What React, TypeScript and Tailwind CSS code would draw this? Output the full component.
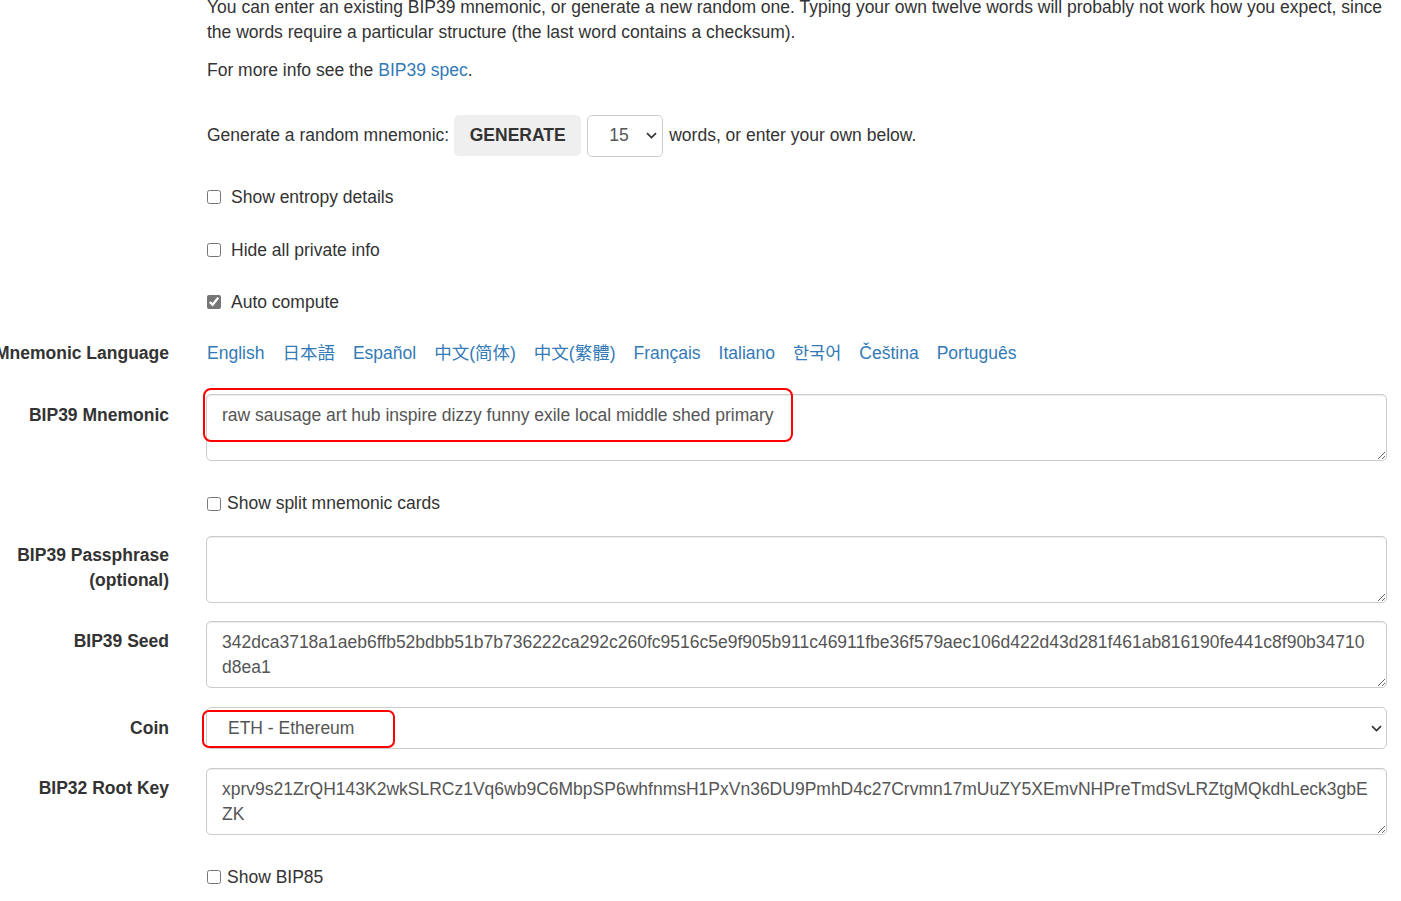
import React from "react";

const languages = [
  "English",
  "日本語",
  "Español",
  "中文(简体)",
  "中文(繁體)",
  "Français",
  "Italiano",
  "한국어",
  "Čeština",
  "Português",
];

const mnemonic = "raw sausage art hub inspire dizzy funny exile local middle shed primary";
const seed =
  "342dca3718a1aeb6ffb52bdbb51b7b736222ca292c260fc9516c5e9f905b911c46911fbe36f579aec106d422d43d281f461ab816190fe441c8f90b34710\nd8ea1";
const rootKey =
  "xprv9s21ZrQH143K2wkSLRCz1Vq6wb9C6MbpSP6whfnmsH1PxVn36DU9PmhD4c27Crvmn17mUuZY5XEmvNHPreTmdSvLRZtgMQkdhLeck3gbE\nZK";

const Row = ({
  label,
  labelClass = "",
  className = "",
  children,
}: {
  label?: React.ReactNode;
  labelClass?: string;
  className?: string;
  children: React.ReactNode;
}) => (
  <div className={`flex ${className}`}>
    <div className={`w-[187px] shrink-0 pr-[18px] flex justify-end whitespace-nowrap font-bold ${labelClass}`}>
      {label && <span className="text-right">{label}</span>}
    </div>
    <div className="flex-1 min-w-0 pl-[19px] pr-[14px]">{children}</div>
  </div>
);

const Chevron = () => (
  <svg width="11" height="7" viewBox="0 0 11 7" fill="none">
    <path d="M1 1.2l4.5 4.3 4.5-4.3" stroke="#333" strokeWidth="1.7" />
  </svg>
);

const Area = ({ value }: { value: string }) => (
  <textarea
    readOnly
    rows={2}
    defaultValue={value}
    className="block w-full h-[67px] rounded-[5px] border border-[#ccc] pl-[15px] pr-[15px] pt-[8px] pb-[6px] text-[#555] leading-[25px] shadow-[inset_0_1px_1px_rgba(0,0,0,0.075)] resize-y outline-none"
  />
);

const Check = ({ label, checked, textGap }: { label: string; checked?: boolean; textGap: string }) => (
  <label className="flex items-center h-[25px]">
    <input
      type="checkbox"
      defaultChecked={checked}
      className="m-0 ml-[1px] w-[14px] h-[14px] accent-[#767676]"
    />
    <span className={textGap}>{label}</span>
  </label>
);

const App = () => {
  return (
    <div className="bg-white min-h-screen overflow-hidden font-['Liberation_Sans','Noto_Sans_CJK_SC',Arial,sans-serif] text-[17.5px] leading-[25px] text-[#333]">
      {/* Intro */}
      <Row className="-mt-[5px]">
        <p className="pl-[1px]">
          You can enter an existing BIP39 mnemonic, or generate a new random one. Typing your own twelve words will
          probably not work how you expect, since
          <br />
          the words require a particular structure (the last word contains a checksum).
        </p>
      </Row>
      <Row className="mt-[12.5px]">
        <p className="pl-[1px]">
          For more info see the <a className="text-[#337ab7]">BIP39 spec</a>.
        </p>
      </Row>

      {/* Generate */}
      <Row className="mt-[32px]">
        <div className="flex items-center h-[42px] pl-[1px]">
          <span>Generate a random mnemonic:</span>
          <button className="ml-[5px] w-[127px] h-[41px] rounded-[5px] bg-[#efefef] font-bold text-[#333]">
            GENERATE
          </button>
          <div className="ml-[6px] w-[76px] h-[42px] rounded-[5px] border border-[#ccc] flex items-center justify-between pl-[21px] pr-[5px] text-[#555]">
            <span>15</span>
            <Chevron />
          </div>
          <span className="ml-[6px]">words, or enter your own below.</span>
        </div>
      </Row>

      {/* Options */}
      <Row className="mt-[28px]">
        <Check label="Show entropy details" textGap="ml-[10px]" />
      </Row>
      <Row className="mt-[28px]">
        <Check label="Hide all private info" textGap="ml-[10px]" />
      </Row>
      <Row className="mt-[27px]">
        <Check label="Auto compute" checked textGap="ml-[10px]" />
      </Row>

      {/* Language */}
      <Row label="Mnemonic Language" className="mt-[26px]">
        <div className="flex gap-[18px] pl-[1px] text-[#337ab7]">
          {languages.map((lang) => (
            <a key={lang} className="whitespace-nowrap">
              {lang}
            </a>
          ))}
        </div>
      </Row>

      {/* Mnemonic */}
      <Row label="BIP39 Mnemonic" labelClass="pt-[8.5px]" className="mt-[28.5px]">
        <div className="relative">
          <Area value={mnemonic} />
          <div className="absolute -left-[3px] -top-[6px] w-[590px] h-[54px] rounded-[8px] border-2 border-[#f00] pointer-events-none" />
        </div>
      </Row>

      <Row className="mt-[30px]">
        <Check label="Show split mnemonic cards" textGap="ml-[6px]" />
      </Row>

      <Row
        label={
          <>
            BIP39 Passphrase
            <br />
            (optional)
          </>
        }
        labelClass="pt-[7.5px]"
        className="mt-[19.5px]"
      >
        <Area value="" />
      </Row>

      <Row label="BIP39 Seed" labelClass="pt-[8.5px]" className="mt-[18px]">
        <Area value={seed} />
      </Row>

      {/* Coin */}
      <Row label="Coin" labelClass="pt-[9px]" className="mt-[19px]">
        <div className="relative">
          <div className="h-[42px] rounded-[5px] border border-[#ccc] flex items-center justify-between pl-[21px] pr-[4px] pt-[1px] text-[#555]">
            <span>ETH - Ethereum</span>
            <Chevron />
          </div>
          <div className="absolute -left-[4px] top-[3px] w-[193px] h-[38px] rounded-[7px] border-2 border-[#f00] pointer-events-none" />
        </div>
      </Row>

      <Row label="BIP32 Root Key" labelClass="pt-[8.5px]" className="mt-[19px]">
        <Area value={rootKey} />
      </Row>

      <Row className="mt-[30px]">
        <Check label="Show BIP85" textGap="ml-[6px]" />
      </Row>
    </div>
  );
};

export default App;
